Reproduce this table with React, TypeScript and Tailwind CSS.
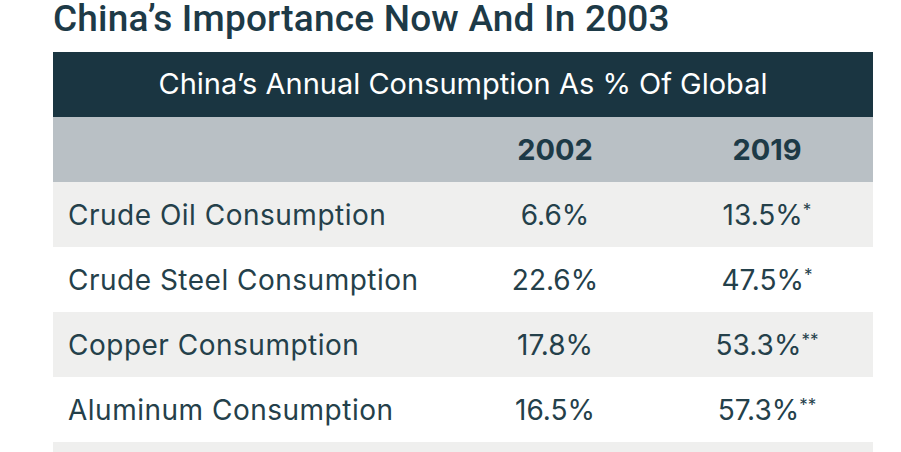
import React from "react";

const rows = [
  { label: "Crude Oil Consumption", a: "6.6%", b: "13.5%", s: "*", bg: "bg-[#efefee]" },
  { label: "Crude Steel Consumption", a: "22.6%", b: "47.5%", s: "*", bg: "bg-white" },
  { label: "Copper Consumption", a: "17.8%", b: "53.3%", s: "**", bg: "bg-[#efefee]" },
  { label: "Aluminum Consumption", a: "16.5%", b: "57.3%", s: "**", bg: "bg-white" },
];

export default function App() {
  return (
    <div className="w-[901px] h-[452px] overflow-hidden bg-white text-[#1f3a45]">
      <div className="pl-[53px] w-[873px]">
        <div className="h-[52px] flex items-start">
          <h1 className="font-['Roboto',sans-serif] text-[37px] leading-[38px] font-medium tracking-[0.2px] text-[#1d3a47] whitespace-nowrap">
            China’s Importance Now And In 2003
          </h1>
        </div>
        <div className="font-['Inter',sans-serif]">
          <div className="h-[65px] bg-[#1a3541] text-white flex items-center justify-center text-[29px] pb-[1px]">
            China’s Annual Consumption As % Of Global
          </div>
          <div className="h-[65px] bg-[#b9c0c5] grid grid-cols-[396px_1fr_1fr] items-center text-[29px] font-bold text-[#1d3a47]">
            <div />
            <div className="text-center">2002</div>
            <div className="text-center">2019</div>
          </div>
          {rows.map((r) => (
            <div
              key={r.label}
              className={`h-[65px] ${r.bg} grid grid-cols-[396px_1fr_1fr] items-center text-[28px] text-[#24404a]`}
            >
              <div className="pl-[15px] tracking-[0.5px]">{r.label}</div>
              <div className="text-center">{r.a}</div>
              <div className="text-center">
                {r.b}
                <span className="text-[17px] align-[9px]">{r.s}</span>
              </div>
            </div>
          ))}
          <div className="h-[65px] bg-[#efefee]" />
        </div>
      </div>
    </div>
  );
}
